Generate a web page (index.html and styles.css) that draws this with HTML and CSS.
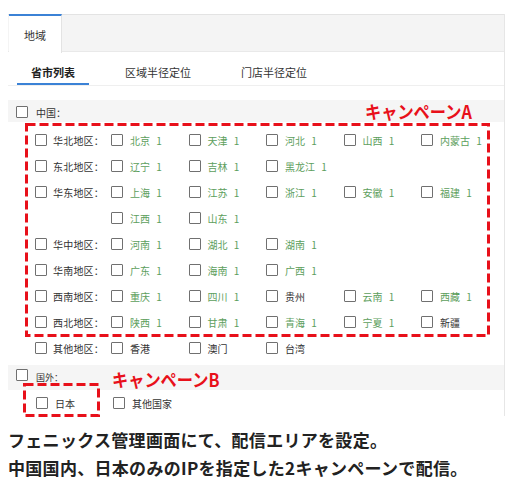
FILE: index.html
```html
<!DOCTYPE html>
<html lang="zh-CN">
<head>
<meta charset="utf-8">
<link rel="stylesheet" href="styles.css">
</head>
<body>
<div class="panel">
  <div class="tabs"><div class="tab">地域</div></div>
  <div class="subtabs">
    <div class="subtab active">省市列表</div>
    <div class="subtab">区域半径定位</div>
    <div class="subtab">门店半径定位</div>
  </div>

  <div class="group-head"><span class="cb"></span><span class="gh-text">中国：</span></div>

  <div class="regions">
    <div class="region">
      <div class="region-label"><span class="cb"></span>华北地区：</div>
      <div class="provs">
        <div class="prov"><span class="cb"></span><span class="g">北京 1</span></div>
        <div class="prov"><span class="cb"></span><span class="g">天津 1</span></div>
        <div class="prov"><span class="cb"></span><span class="g">河北 1</span></div>
        <div class="prov"><span class="cb"></span><span class="g">山西 1</span></div>
        <div class="prov"><span class="cb"></span><span class="g">内蒙古 1</span></div>
      </div>
    </div>
    <div class="region">
      <div class="region-label"><span class="cb"></span>东北地区：</div>
      <div class="provs">
        <div class="prov"><span class="cb"></span><span class="g">辽宁 1</span></div>
        <div class="prov"><span class="cb"></span><span class="g">吉林 1</span></div>
        <div class="prov"><span class="cb"></span><span class="g">黑龙江 1</span></div>
      </div>
    </div>
    <div class="region">
      <div class="region-label"><span class="cb"></span>华东地区：</div>
      <div class="provs">
        <div class="prov"><span class="cb"></span><span class="g">上海 1</span></div>
        <div class="prov"><span class="cb"></span><span class="g">江苏 1</span></div>
        <div class="prov"><span class="cb"></span><span class="g">浙江 1</span></div>
        <div class="prov"><span class="cb"></span><span class="g">安徽 1</span></div>
        <div class="prov"><span class="cb"></span><span class="g">福建 1</span></div>
        <div class="prov"><span class="cb"></span><span class="g">江西 1</span></div>
        <div class="prov"><span class="cb"></span><span class="g">山东 1</span></div>
      </div>
    </div>
    <div class="region">
      <div class="region-label"><span class="cb"></span>华中地区：</div>
      <div class="provs">
        <div class="prov"><span class="cb"></span><span class="g">河南 1</span></div>
        <div class="prov"><span class="cb"></span><span class="g">湖北 1</span></div>
        <div class="prov"><span class="cb"></span><span class="g">湖南 1</span></div>
      </div>
    </div>
    <div class="region">
      <div class="region-label"><span class="cb"></span>华南地区：</div>
      <div class="provs">
        <div class="prov"><span class="cb"></span><span class="g">广东 1</span></div>
        <div class="prov"><span class="cb"></span><span class="g">海南 1</span></div>
        <div class="prov"><span class="cb"></span><span class="g">广西 1</span></div>
      </div>
    </div>
    <div class="region">
      <div class="region-label"><span class="cb"></span>西南地区：</div>
      <div class="provs">
        <div class="prov"><span class="cb"></span><span class="g">重庆 1</span></div>
        <div class="prov"><span class="cb"></span><span class="g">四川 1</span></div>
        <div class="prov"><span class="cb"></span><span>贵州</span></div>
        <div class="prov"><span class="cb"></span><span class="g">云南 1</span></div>
        <div class="prov"><span class="cb"></span><span class="g">西藏 1</span></div>
      </div>
    </div>
    <div class="region">
      <div class="region-label"><span class="cb"></span>西北地区：</div>
      <div class="provs">
        <div class="prov"><span class="cb"></span><span class="g">陕西 1</span></div>
        <div class="prov"><span class="cb"></span><span class="g">甘肃 1</span></div>
        <div class="prov"><span class="cb"></span><span class="g">青海 1</span></div>
        <div class="prov"><span class="cb"></span><span class="g">宁夏 1</span></div>
        <div class="prov"><span class="cb"></span><span>新疆</span></div>
      </div>
    </div>
    <div class="region">
      <div class="region-label"><span class="cb"></span>其他地区：</div>
      <div class="provs">
        <div class="prov"><span class="cb"></span><span>香港</span></div>
        <div class="prov"><span class="cb"></span><span>澳门</span></div>
        <div class="prov"><span class="cb"></span><span>台湾</span></div>
      </div>
    </div>
  </div>

  <div class="group-head foreign"><span class="cb"></span><span class="gh-text small">国外：</span></div>
  <div class="foreign-row">
    <div class="fitem"><span class="cb"></span><span>日本</span></div>
    <div class="fitem"><span class="cb"></span><span>其他国家</span></div>
  </div>

  <svg class="box box-a" width="465" height="214" viewBox="0 0 465 214"><rect x="1.5" y="1.5" width="462" height="211" /></svg>
  <div class="campaign campaign-a" lang="ja">キャンペーンA</div>
  <svg class="box box-b" width="77" height="34" viewBox="0 0 77 34"><rect x="1.5" y="1.5" width="74" height="31" /></svg>
  <div class="campaign campaign-b" lang="ja">キャンペーンB</div>
</div>

<div class="caption" lang="ja">
  <p>フェニックス管理画面にて、配信エリアを設定。</p>
  <p>中国国内、日本のみのIPを指定した2キャンペーンで配信。</p>
</div>
</body>
</html>
```

FILE: styles.css
```css
* { box-sizing: border-box; }
html, body { margin: 0; padding: 0; background: #fff; }
body {
  font-family: "Noto Sans CJK SC", "Noto Sans", sans-serif;
  color: #333;
  width: 510px;
}

.panel {
  position: relative;
  margin: 14px 0 0 8px;
  width: 497px;
  border-right: 1px solid #e6e6e6;
}

.tabs {
  display: flex;
  height: 38px;
  background: #f4f4f4;
  border-top: 1px solid #e3e3e3;
  border-bottom: 1px solid #e9e9e9;
}
.tab {
  margin: -1px 0 -1px 1px;
  width: 53px;
  height: 39px;
  background: #fff;
  border-top: 2px solid #3b82d6;
  border-right: 1px solid #e3e3e3;
  font-size: 11px;
  line-height: 16px;
  padding-top: 11px;
  text-align: center;
  color: #333;
}

.subtabs {
  display: flex;
  gap: 22px;
  padding-left: 9px;
  height: 34px;
  border-bottom: 1px solid #efefef;
}
.subtab {
  padding: 12px 14px 3px;
  font-size: 11px;
  line-height: 16px;
  border-bottom: 2px solid transparent;
  color: #333;
  height: 33px;
}
.subtab.active {
  font-weight: 700;
  border-bottom-color: #3b82d6;
  color: #222;
}

.cb {
  display: inline-block;
  width: 12px;
  height: 12px;
  border: 1px solid #707070;
  border-radius: 1px;
  background: #fff;
  flex: none;
}

.group-head {
  display: flex;
  align-items: flex-start;
  margin-top: 14px;
  height: 22px;
  background: #f5f5f5;
  padding: 6px 0 0 8px;
}
.gh-text {
  margin-left: 8px;
  font-size: 10px;
  line-height: 14px;
}
.gh-text.small { font-size: 9px; line-height: 14px; margin-top: 2px; }

.regions { margin-top: 5px; }
.region { display: flex; }
.region-label {
  width: 103px;
  padding-left: 27px;
  height: 26px;
  display: flex;
  align-items: center;
  gap: 6px;
  font-size: 10px;
  color: #333;
  letter-spacing: 0.2px;
}
.provs {
  display: flex;
  flex-wrap: wrap;
  width: 388px;
}
.prov {
  width: 77.5px;
  height: 26px;
  display: flex;
  align-items: center;
  gap: 7px;
  font-size: 10px;
  color: #333;
  word-spacing: 4px;
}
.g { color: #5c9e5c; }

.group-head.foreign {
  margin-top: 4px;
  height: 25px;
  padding-top: 4px;
}
.foreign-row {
  display: flex;
  padding-left: 28px;
  height: 26px;
}
.fitem {
  width: 77px;
  display: flex;
  align-items: center;
  gap: 7px;
  font-size: 10px;
  color: #333;
}

.box { position: absolute; }
.box rect {
  fill: none;
  stroke: #e8101a;
  stroke-width: 3;
  stroke-dasharray: 9 4;
}
.box-a { left: 17px; top: 109px; }
.box-b { left: 15px; top: 369px; }

.campaign {
  position: absolute;
  font-family: "Noto Sans CJK JP", sans-serif;
  font-weight: 700;
  font-size: 18px;
  line-height: 20px;
  color: #e8101a;
  transform: scaleX(0.9);
  transform-origin: left top;
  white-space: nowrap;
}
.campaign-a { left: 357px; top: 87px; }
.campaign-b { left: 104px; top: 355px; }

.caption {
  margin: 10px 0 0 8px;
  font-family: "Noto Sans CJK JP", sans-serif;
  font-weight: 700;
  font-size: 17px;
  line-height: 28px;
  color: #222;
  letter-spacing: 0.3px;
}
.caption p { margin: 0; white-space: nowrap; }
```
